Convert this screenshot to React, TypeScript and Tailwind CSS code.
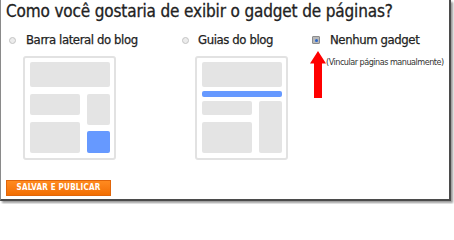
import React from 'react';

const font = { fontFamily: '"DejaVu Sans Condensed", "DejaVu Sans", sans-serif' };

const Radio = ({ checked = false }: { checked?: boolean }) =>
  checked ? (
    <span className="flex h-[8px] w-[8px] shrink-0 items-center justify-center rounded-[1px] border border-[#8c8c8c] bg-[#b9b9b9]">
      <span className="h-[3px] w-[3px] rounded-full bg-[#2b66c9]" />
    </span>
  ) : (
    <span className="h-[7px] w-[7px] shrink-0 rounded-full border border-[#c4c4c4] bg-[#ececec]" />
  );

const Block = ({ className }: { className: string }) => (
  <div className={`rounded-[2px] bg-[#e4e4e4] ${className}`} />
);

const SidebarPreview = () => (
  <div className="ml-[14px] mt-[8px] h-[104px] w-[93px] rounded-[3px] border-2 border-[#e2e2e2] pl-[5px] pr-[4px] pt-[4px]">
    <Block className="h-[25px] w-[80px]" />
    <div className="mt-[7px] flex gap-[7px]">
      <div className="flex w-[50px] flex-col gap-[7px]">
        <Block className="h-[21px]" />
        <Block className="h-[31px]" />
      </div>
      <div className="flex w-[23px] flex-col gap-[6px]">
        <Block className="h-[31px]" />
        <div className="h-[22px] rounded-[2px] bg-[#6699ff]" />
      </div>
    </div>
  </div>
);

const TabsPreview = () => (
  <div className="ml-[13px] mt-[8px] h-[104px] w-[93px] rounded-[3px] border-2 border-[#e2e2e2] pl-[5px] pr-[4px] pt-[4px]">
    <Block className="h-[25px] w-[80px]" />
    <div className="mt-[4px] h-[6px] w-[80px] rounded-[2px] bg-[#6699ff]" />
    <div className="mt-[4px] flex gap-[7px]">
      <div className="flex w-[50px] flex-col gap-[7px]">
        <Block className="h-[14px]" />
        <Block className="h-[31px]" />
      </div>
      <Block className="h-[52px] w-[23px]" />
    </div>
  </div>
);

const labelClass =
  'flex h-[16px] items-center whitespace-nowrap text-[13px] leading-[16px] tracking-[-0.4px] [-webkit-text-stroke:0.25px_#222]';

export default function App() {
  return (
    <div className="h-[204px] w-[454px] overflow-hidden bg-white" style={font}>
      <div className="relative h-[201px] w-[451px] border-b-2 border-l border-r-2 border-[#4b4b4b] border-l-[#8a8a8a] shadow-[2px_2px_2px_rgba(0,0,0,0.4)]">
        <h1 className="whitespace-nowrap pl-[5px] text-[17px] leading-[22px] tracking-[-0.15px] text-[#222] [-webkit-text-stroke:0.3px_#222]">
          Como você gostaria de exibir o gadget de páginas?
        </h1>

        <div className="mt-[10px] flex pl-[8px] text-[#222]">
          <div className="w-[173px] shrink-0">
            <label className={`${labelClass} gap-[10px]`}>
              <Radio />
              Barra lateral do blog
            </label>
            <SidebarPreview />
          </div>

          <div className="w-[130px] shrink-0">
            <label className={`${labelClass} gap-[9px]`}>
              <Radio />
              Guias do blog
            </label>
            <TabsPreview />
          </div>

          <div className="relative min-w-0 flex-1">
            <label className={`${labelClass} gap-[10px]`}>
              <Radio checked />
              Nenhum gadget
            </label>
            <p className="ml-[14px] mt-[8px] whitespace-nowrap text-[9px] leading-[12px] tracking-[-0.5px] text-[#333]">
              (Vincular páginas manualmente)
            </p>
            {/* red pointer arrow */}
            <svg
              className="absolute left-[-3px] top-[18px]"
              width="18"
              height="49"
              viewBox="0 0 18 49"
            >
              <polygon points="9,1 17,13.5 13,13.5 13,48 5,48 5,13.5 1,13.5" fill="#ff0000" />
            </svg>
          </div>
        </div>

        <button className="ml-[5px] mt-[20px] flex h-[16px] w-[105px] items-center justify-center border border-[#e0650a] bg-gradient-to-b from-[#ff8a1f] to-[#f26e00] text-[8px] font-bold tracking-[0.2px] text-white">
          SALVAR E PUBLICAR
        </button>
      </div>
    </div>
  );
}
